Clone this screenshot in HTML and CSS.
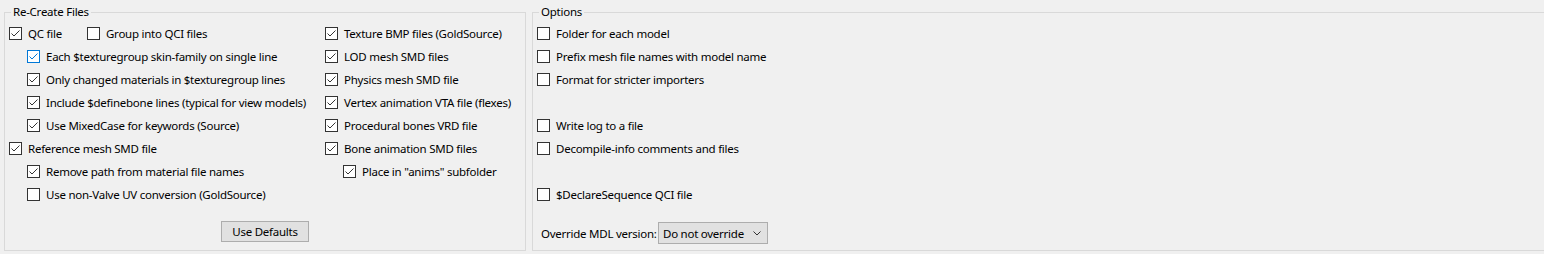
FILE: index.html
```html
<!DOCTYPE html>
<html lang="en">
<head>
    <meta charset="UTF-8">
    <title>Decompile options</title>
    <link rel="stylesheet" href="styles.css">
</head>
<body>
    <div class="panel">
        <fieldset class="group recreate">
            <legend>Re-Create Files</legend>
            <div class="cols">
                <div class="col first">
                    <div class="row">
                        <label class="check wide"><span class="box"><svg viewBox="0 0 11 11"><polyline points="1.5,5.5 4,8 9.5,2.5"/></svg></span>QC file</label>
                        <label class="check"><span class="box"></span>Group into QCI files</label>
                    </div>
                    <div class="row sub">
                        <label class="check"><span class="box focus"><svg viewBox="0 0 11 11"><polyline points="1.5,5.5 4,8 9.5,2.5"/></svg></span>Each $texturegroup skin-family on single line</label>
                    </div>
                    <div class="row sub">
                        <label class="check"><span class="box"><svg viewBox="0 0 11 11"><polyline points="1.5,5.5 4,8 9.5,2.5"/></svg></span>Only changed materials in $texturegroup lines</label>
                    </div>
                    <div class="row sub">
                        <label class="check"><span class="box"><svg viewBox="0 0 11 11"><polyline points="1.5,5.5 4,8 9.5,2.5"/></svg></span>Include $definebone lines (typical for view models)</label>
                    </div>
                    <div class="row sub">
                        <label class="check"><span class="box"><svg viewBox="0 0 11 11"><polyline points="1.5,5.5 4,8 9.5,2.5"/></svg></span>Use MixedCase for keywords (Source)</label>
                    </div>
                    <div class="row">
                        <label class="check"><span class="box"><svg viewBox="0 0 11 11"><polyline points="1.5,5.5 4,8 9.5,2.5"/></svg></span>Reference mesh SMD file</label>
                    </div>
                    <div class="row sub">
                        <label class="check"><span class="box"><svg viewBox="0 0 11 11"><polyline points="1.5,5.5 4,8 9.5,2.5"/></svg></span>Remove path from material file names</label>
                    </div>
                    <div class="row sub">
                        <label class="check"><span class="box"></span>Use non-Valve UV conversion (GoldSource)</label>
                    </div>
                </div>
                <div class="col">
                    <div class="row">
                        <label class="check"><span class="box"><svg viewBox="0 0 11 11"><polyline points="1.5,5.5 4,8 9.5,2.5"/></svg></span>Texture BMP files (GoldSource)</label>
                    </div>
                    <div class="row">
                        <label class="check"><span class="box"><svg viewBox="0 0 11 11"><polyline points="1.5,5.5 4,8 9.5,2.5"/></svg></span>LOD mesh SMD files</label>
                    </div>
                    <div class="row">
                        <label class="check"><span class="box"><svg viewBox="0 0 11 11"><polyline points="1.5,5.5 4,8 9.5,2.5"/></svg></span>Physics mesh SMD file</label>
                    </div>
                    <div class="row">
                        <label class="check"><span class="box"><svg viewBox="0 0 11 11"><polyline points="1.5,5.5 4,8 9.5,2.5"/></svg></span>Vertex animation VTA file (flexes)</label>
                    </div>
                    <div class="row">
                        <label class="check"><span class="box"><svg viewBox="0 0 11 11"><polyline points="1.5,5.5 4,8 9.5,2.5"/></svg></span>Procedural bones VRD file</label>
                    </div>
                    <div class="row">
                        <label class="check"><span class="box"><svg viewBox="0 0 11 11"><polyline points="1.5,5.5 4,8 9.5,2.5"/></svg></span>Bone animation SMD files</label>
                    </div>
                    <div class="row sub">
                        <label class="check"><span class="box"><svg viewBox="0 0 11 11"><polyline points="1.5,5.5 4,8 9.5,2.5"/></svg></span>Place in "anims" subfolder</label>
                    </div>
                </div>
            </div>
            <div class="actions">
                <button class="btn">Use Defaults</button>
            </div>
        </fieldset>

        <fieldset class="group options">
            <legend>Options</legend>
            <div class="row">
                <label class="check"><span class="box"></span>Folder for each model</label>
            </div>
            <div class="row">
                <label class="check"><span class="box"></span>Prefix mesh file names with model name</label>
            </div>
            <div class="row">
                <label class="check"><span class="box"></span>Format for stricter importers</label>
            </div>
            <div class="row"></div>
            <div class="row">
                <label class="check"><span class="box"></span>Write log to a file</label>
            </div>
            <div class="row">
                <label class="check"><span class="box"></span>Decompile-info comments and files</label>
            </div>
            <div class="row"></div>
            <div class="row">
                <label class="check"><span class="box"></span>$DeclareSequence QCI file</label>
            </div>
            <div class="override">
                <span class="override-label">Override MDL version:</span>
                <div class="select">
                    <span>Do not override</span>
                    <svg class="chevron" viewBox="0 0 8 5"><polyline points="0.5,0.5 4,4 7.5,0.5"/></svg>
                </div>
            </div>
        </fieldset>
    </div>
</body>
</html>
```

FILE: styles.css
```css
*{
    margin:0;
    padding:0;
    box-sizing: border-box;
}

body{
    background-color:#f0f0f0;
    font-family:"Noto Sans","Open Sans",sans-serif;
    font-size:11.5px;
    letter-spacing:-0.25px;
    color:#000;
    overflow: hidden;
    width:1544px;
    height:254px;
}

.panel{
    display:flex;
    gap:6px;
    padding:4px 0 0 4px;
}

.group{
    border:1px solid #d9d9d9;
    min-width:0;
    height:247px;
    padding:2px 0 0 4px;
}

.group legend{
    margin-left:2px;
    padding:0 2px;
    line-height:16px;
    height:16px;
}

.recreate{
    flex:0 0 522px;
    padding-right:4px;
}

.options{
    flex:1;
    border-right:none;
}

.cols{
    display:flex;
}

.col.first{
    width:316px;
}

.row{
    height:23px;
    display:flex;
    align-items:center;
}

.row.sub{
    padding-left:18px;
}

.check{
    display:flex;
    align-items:center;
    white-space:nowrap;
    line-height:16px;
}

.check.wide{
    width:78px;
}

.box{
    width:13px;
    height:13px;
    border:1px solid #333;
    background-color:#fff;
    margin-right:6px;
    flex:none;
    display:flex;
}

.box svg{
    width:11px;
    height:11px;
    fill:none;
    stroke:#333;
    stroke-width:1;
}

.box.focus{
    border-color:#0078d7;
}

.box.focus svg{
    stroke:#0078d7;
}

.actions{
    display:flex;
    justify-content:center;
    margin-top:15px;
}

.btn{
    width:88px;
    height:21px;
    background-color:#e1e1e1;
    border:1px solid #adadad;
    font:inherit;
    letter-spacing:inherit;
    color:#000;
}

.override{
    display:flex;
    align-items:center;
    margin-top:16px;
    padding-left:4px;
}

.override-label{
    width:117px;
    white-space:nowrap;
}

.select{
    width:110px;
    height:22px;
    background-color:#e1e1e1;
    border:1px solid #adadad;
    display:flex;
    align-items:center;
    justify-content:space-between;
    padding:0 6px 0 4px;
    white-space:nowrap;
}

.chevron{
    width:8px;
    height:5px;
    fill:none;
    stroke:#333;
    stroke-width:1;
}
```
